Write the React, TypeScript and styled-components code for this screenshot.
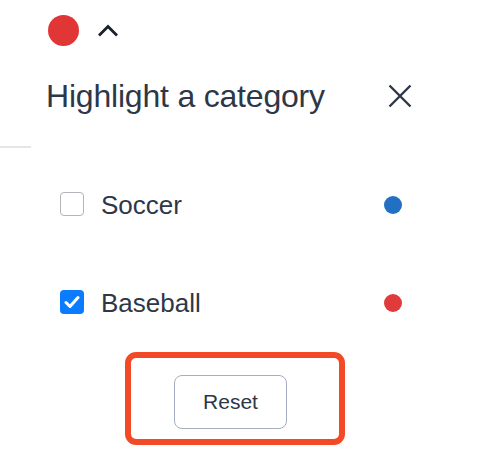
import React from 'react';
import styled, { createGlobalStyle } from 'styled-components';

const GlobalStyle = createGlobalStyle`
    html, body {
        margin: 0;
        padding: 0;
        background: #fff;
    }
    body {
        font-family: 'Liberation Sans', Arial, Helvetica, sans-serif;
        color: #2d3748;
    }
`;

const Page = styled.div`
    width: 482px;
    height: 472px;
    display: flex;
    flex-direction: column;
    overflow: hidden;
`;

const TopBar = styled.div`
    display: flex;
    align-items: center;
    gap: 18px;
    padding: 15px 0 0 48px;
`;

const Dot = styled.span<{ $color: string; $size: number }>`
    display: block;
    width: ${p => p.$size}px;
    height: ${p => p.$size}px;
    border-radius: 50%;
    background: ${p => p.$color};
    flex: none;
`;

const TitleRow = styled.div`
    display: flex;
    align-items: center;
    justify-content: space-between;
    height: 40px;
    margin-top: 30px;
    padding: 0 70px 0 46px;
`;

const Title = styled.h2`
    margin: 0;
    font-size: 32px;
    font-weight: 400;
    line-height: 40px;
    color: #2d3748;
    letter-spacing: -0.2px;
`;

const CloseButton = styled.button`
    border: 0;
    background: none;
    padding: 0;
    width: 24px;
    height: 24px;
    display: flex;
    align-items: center;
    justify-content: center;
    cursor: pointer;
`;

const Divider = styled.div`
    width: 31px;
    height: 2px;
    background: #e6e6e6;
    margin-top: 30px;
`;

const List = styled.div`
    display: flex;
    flex-direction: column;
    gap: 68px;
    margin-top: 42px;
    padding: 0 80px 0 60px;
`;

const Row = styled.label`
    display: flex;
    align-items: center;
    justify-content: space-between;
    height: 30px;
    cursor: pointer;
`;

const RowLabel = styled.span`
    display: flex;
    align-items: center;
    gap: 17px;
    font-size: 26px;
    line-height: 30px;
    color: #2d3748;
`;

const Box = styled.span<{ $checked: boolean }>`
    width: 24px;
    height: 24px;
    box-sizing: border-box;
    border-radius: 4px;
    margin-top: -3px;
    display: flex;
    align-items: center;
    justify-content: center;
    background: ${p => (p.$checked ? '#0b7cff' : '#fff')};
    border: ${p => (p.$checked ? 'none' : '1.5px solid #b4b4ba')};
`;

const Footer = styled.div`
    display: flex;
    margin-top: 34px;
    padding-left: 125px;
`;

const Highlight = styled.div`
    width: 220px;
    height: 93px;
    box-sizing: border-box;
    border: 6px solid #f24a26;
    border-radius: 11px;
    padding: 17px 0 0 43px;
`;

const ResetButton = styled.button`
    width: 113px;
    height: 54px;
    box-sizing: border-box;
    border: 1px solid #a3aec0;
    border-radius: 8px;
    background: #fff;
    font-family: inherit;
    font-size: 21px;
    color: #2d3748;
    cursor: pointer;
`;

const categories = [
    { name: 'Soccer', color: '#2170c4', checked: false },
    { name: 'Baseball', color: '#e03a3a', checked: true },
];

export default function App() {
    return (
        <Page>
            <GlobalStyle />
            <TopBar>
                <Dot $color="#e03636" $size={31} />
                <svg width="22" height="13" viewBox="0 0 22 13">
                    <path d="M2 11.5 L11 2.5 L20 11.5" fill="none" stroke="#1a202c" strokeWidth="2.8" />
                </svg>
            </TopBar>
            <TitleRow>
                <Title>Highlight a category</Title>
                <CloseButton aria-label="Close">
                    <svg width="24" height="24" viewBox="0 0 24 24">
                        <path d="M1.5 1.5 L22.5 22.5 M22.5 1.5 L1.5 22.5" stroke="#2d3748" strokeWidth="2.4" />
                    </svg>
                </CloseButton>
            </TitleRow>
            <Divider />
            <List>
                {categories.map(c => (
                    <Row key={c.name}>
                        <RowLabel>
                            <Box $checked={c.checked}>
                                {c.checked && (
                                    <svg width="16" height="14" viewBox="0 0 16 14">
                                        <path d="M2 7.5 L6 11.5 L14 2.5" fill="none" stroke="#fff" strokeWidth="3" strokeLinecap="round" strokeLinejoin="round" />
                                    </svg>
                                )}
                            </Box>
                            {c.name}
                        </RowLabel>
                        <Dot $color={c.color} $size={18} />
                    </Row>
                ))}
            </List>
            <Footer>
                <Highlight>
                    <ResetButton>Reset</ResetButton>
                </Highlight>
            </Footer>
        </Page>
    );
}
